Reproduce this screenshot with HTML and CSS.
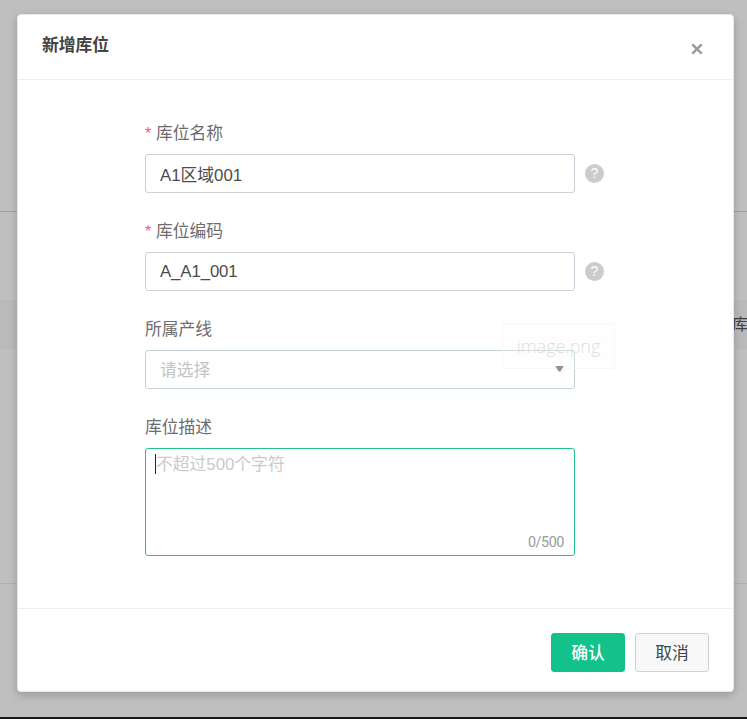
FILE: index.html
```
<!DOCTYPE html>
<html lang="zh-CN">
<head>
<meta charset="utf-8">
<title>新增库位</title>
<link rel="stylesheet" href="styles.css">
</head>
<body>
<div class="page">
  <div class="page-top"></div>
  <div class="page-tools"></div>
  <div class="page-row"><span>库</span></div>
  <div class="page-list"></div>
  <div class="page-rest"></div>
</div>
<div class="modal" role="dialog">
  <header class="modal-header">
    <h1 class="modal-title">新增库位</h1>
    <svg class="close" viewBox="0 0 12 12"><path d="M1.3 1.3 10.7 10.7M10.7 1.3 1.3 10.7"/></svg>
  </header>
  <main class="modal-body">
    <div class="field">
      <div class="label"><span class="star">*</span>库位名称</div>
      <div class="line">
        <div class="input"><span>A1区域001</span></div>
        <span class="help">?</span>
      </div>
    </div>
    <div class="field">
      <div class="label"><span class="star">*</span>库位编码</div>
      <div class="line">
        <div class="input"><span class="latin">A_A1_001</span></div>
        <span class="help">?</span>
      </div>
    </div>
    <div class="field">
      <div class="label">所属产线</div>
      <div class="line">
        <div class="input select"><span>请选择</span><i class="arrow"></i></div>
      </div>
      <div class="ghost">image.png</div>
    </div>
    <div class="field">
      <div class="label">库位描述</div>
      <div class="textarea">
        <div class="hint"><i class="caret"></i><span>不超过500个字符</span></div>
        <div class="count">0/500</div>
      </div>
    </div>
  </main>
  <footer class="modal-footer">
    <button class="btn primary">确认</button>
    <button class="btn">取消</button>
  </footer>
</div>
</body>
</html>
```
FILE: styles.css
```
* { box-sizing: border-box; }
body {
  margin: 0;
  height: 719px;
  overflow: hidden;
  position: relative;
  background: #bfbfbf;
  font-family: "Liberation Sans", "Noto Sans CJK SC", sans-serif;
  font-size: 16.8px;
  color: #404040;
}
.page { display: flex; flex-direction: column; height: 719px; }
.page-top { height: 212px; border-bottom: 1px solid #a0a0a0; }
.page-tools { height: 88px; }
.page-row {
  height: 49px;
  padding-left: 732px;
  background: #bababa;
  font-size: 16px;
  line-height: 50px;
  white-space: nowrap;
}
.page-list { height: 235px; border-bottom: 1px solid #b1b1b1; }
.page-rest { flex: 1; border-bottom: 2px solid #15171b; }
.modal {
  position: absolute;
  left: 17px;
  top: 14px;
  width: 717px;
  height: 678px;
  display: flex;
  flex-direction: column;
  background: #fff;
  border: 1px solid #e9e9e9;
  border-radius: 4px;
  box-shadow: 0 3px 9px rgba(0, 0, 0, .2);
}
.modal-header {
  height: 65px;
  padding: 0 30px 0 24px;
  display: flex;
  justify-content: space-between;
  align-items: center;
  border-bottom: 1px solid #eee;
}
.modal-title { margin: 0 0 2px; font-size: 16.8px; line-height: 24px; font-weight: 700; color: #444; }
.close { width: 12px; height: 12px; margin-top: 3px; fill: none; stroke: #999; stroke-width: 2.4; }
.modal-body { flex: 1; padding: 32px 0 0 127px; }
.field { position: relative; height: 98px; }
.label { height: 42px; padding-top: 1px; line-height: 42px; color: #6c6c6c; display: flex; }
.star { width: 11px; color: #fc5570; font-size: 16px; }
.line { display: flex; align-items: center; gap: 10px; }
.input {
  width: 430px;
  height: 39px;
  padding: 0 10px 0 14px;
  display: flex;
  align-items: center;
  justify-content: space-between;
  border: 1px solid #cbd1d9;
  border-radius: 3px;
  color: #4c4c4c;
}
.latin { letter-spacing: -.1px; }
.select { color: #c4c4c4; padding-bottom: 2px; border-color: #c5d2d7; }
.arrow {
  width: 9px;
  height: 6px;
  position: relative;
  z-index: 1;
  background: #929292;
  clip-path: polygon(0 0, 100% 0, 60% 100%, 40% 100%);
}
.help {
  width: 19px;
  height: 19px;
  border-radius: 50%;
  background: #ccc;
  color: #fff;
  font-size: 14px;
  line-height: 19px;
  text-align: center;
}
.ghost {
  position: absolute;
  left: 357px;
  top: 15px;
  width: 113px;
  height: 46px;
  border: 1px solid #f8f8f8;
  background: rgba(252, 252, 252, .2);
  color: #dedede;
  font: 300 18px/44px "Open Sans", "Noto Sans", sans-serif;
  text-align: center;
}
.textarea {
  width: 430px;
  height: 108px;
  padding: 5px 10px 2px 9px;
  display: flex;
  flex-direction: column;
  justify-content: space-between;
  border: 1px solid #25c48f;
  border-radius: 3px;
}
.hint { display: flex; height: 20px; line-height: 22px; color: #cacaca; }
.caret { width: 1px; height: 20px; background: #222; }
.count { align-self: flex-end; font: 14.4px/20px Roboto, sans-serif; letter-spacing: -.45px; color: #999; }
.modal-footer {
  height: 83px;
  padding: 24px 24px 0;
  display: flex;
  justify-content: flex-end;
  gap: 10px;
  border-top: 1px solid #eee;
}
.btn {
  width: 74px;
  height: 39px;
  padding: 0 0 2px;
  border: 1px solid #cdd2d9;
  border-radius: 3px;
  background: #f8f8f8;
  color: #444;
  font: inherit;
}
.primary { border-color: #13c28b; background: #13c28b; color: #fff; font-weight: 500; }
```
